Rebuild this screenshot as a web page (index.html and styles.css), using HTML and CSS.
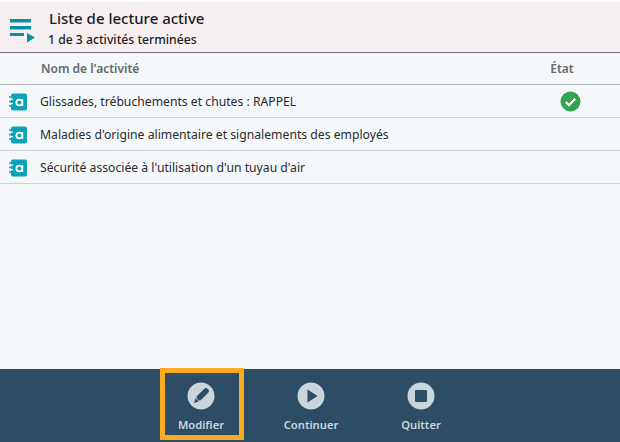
FILE: index.html
```html
<!DOCTYPE html>
<html lang="fr">
<head>
<meta charset="utf-8">
<title>Liste de lecture active</title>
<link rel="stylesheet" href="styles.css">
</head>
<body>
<div class="app">
  <header class="banner">
    <svg class="queue" width="26" height="24" viewBox="0 0 26 24"><path fill="#0b8fa3" d="M0 0h21v3.500H0zM0 7h21v3.500H0zM0 14h14v3H0zM17 14l8 4.500-8 5z"/></svg>
    <div class="titles">
      <div class="title">Liste de lecture active</div>
      <div class="sub">1 de 3 activités terminées</div>
    </div>
  </header>
  <main class="list">
    <div class="row head"><span class="name">Nom de l'activité</span><span class="state">État</span></div>
    <div class="row item">
      <svg class="ico" width="18" height="18" viewBox="0 0 18 18"><use href="#nb"/></svg>
      <span class="name">Glissades, trébuchements et chutes : RAPPEL</span>
      <span class="state"><svg width="21" height="21" viewBox="0 0 21 21"><circle cx="10.500" cy="10.500" r="10" fill="#32a350"/><path d="M5.800 11l3.200 3.200 6.200-6.400" fill="none" stroke="#fff" stroke-width="2.200"/></svg></span>
    </div>
    <div class="row item">
      <svg class="ico" width="18" height="18" viewBox="0 0 18 18"><use href="#nb"/></svg>
      <span class="name">Maladies d'origine alimentaire et signalements des employés</span>
    </div>
    <div class="row item">
      <svg class="ico" width="18" height="18" viewBox="0 0 18 18"><use href="#nb"/></svg>
      <span class="name">Sécurité associée à l'utilisation d'un tuyau d'air</span>
    </div>
  </main>
  <footer class="bar">
    <button class="act focus">
      <svg width="28" height="28" viewBox="0 0 28 28"><circle cx="14" cy="14" r="13.500" fill="#c9d5dc"/><path d="M12.500 15.500l6.500-6.500" fill="none" stroke="#2d4c66" stroke-width="5.500" stroke-linecap="round"/><path fill="#2d4c66" d="M7 21l1.500-4.800 3.300 3.300z"/></svg>
      <span>Modifier</span>
    </button>
    <button class="act">
      <svg width="28" height="28" viewBox="0 0 28 28"><circle cx="14" cy="14" r="13.500" fill="#c9d5dc"/><path fill="#2d4c66" d="M10.500 7.500l10 6.500-10 6.500z"/></svg>
      <span>Continuer</span>
    </button>
    <button class="act">
      <svg width="28" height="28" viewBox="0 0 28 28"><circle cx="14" cy="14" r="13.500" fill="#c9d5dc"/><rect x="8" y="8" width="12" height="12" rx="1" fill="#2d4c66"/></svg>
      <span>Quitter</span>
    </button>
  </footer>
</div>
<svg class="defs" width="0" height="0"><defs><g id="nb"><rect x="2" y="0.500" width="16" height="17" rx="2" fill="#0aa3b8"/><path d="M0 4h4M0 8.500h4M0 13h4" stroke="#0aa3b8" stroke-width="1.500"/><path d="M2 6.200h2M2 10.700h2" stroke="#fff" stroke-width="1.200"/><circle cx="10.300" cy="9.500" r="2.900" fill="none" stroke="#fff" stroke-width="1.800"/><path d="M13.500 6v7" stroke="#fff" stroke-width="1.500"/></g></defs></svg>
</body>
</html>
```
FILE: styles.css
```css
* { box-sizing: border-box; }
html, body { margin: 0; height: 100%; }
body { font-family: "Noto Sans", "Open Sans", sans-serif; background: #f4f8fa; color: #222; overflow: hidden; }
.defs { display: block; height: 0; }
.app { display: flex; flex-direction: column; height: 442px; padding-top: 2px; background: linear-gradient(#fff, #fff) top/100% 2px no-repeat #f4f8fa; }
.banner { display: flex; align-items: center; height: 51px; background: #f6eff2; border-bottom: 1px solid #6e6e6e; padding: 0 0 0 10px; flex: none; }
.queue { flex: none; margin: 7px 13px 0 0; }
.titles { display: flex; flex-direction: column; padding-top: 1px; }
.title { font-size: 15px; line-height: 20px; font-weight: 500; color: #1c1c22; }
.sub { font-size: 12.200px; line-height: 16px; font-weight: 500; color: #1c1c22; margin-top: 4px; margin-left: -1px; }
.list { flex: 1; }
.row { display: flex; align-items: center; position: relative; }
.head { height: 32px; padding-left: 41px; border-bottom: 1px solid #b4b8bb; font-size: 12px; font-weight: 600; color: #67686b; }
.head .state { font-size: 12px; width: 116px; }
.item { height: 33px; padding: 1px 0 0 9px; border-bottom: 1px solid #cdd5da; font-size: 12.200px; color: #2a2a2e; }
.ico { flex: none; margin-right: 13px; }
.name { flex: 1; }
.state { width: 100px; display: flex; justify-content: center; }
.bar { flex: none; height: 73px; background: #2d4c66; display: flex; padding-left: 161px; gap: 28px; }
.act { width: 82px; height: 70px; background: none; border: 0; padding: 13px 2px 0 0; margin: 0; display: flex; flex-direction: column; align-items: center; gap: 7px; font: 600 11.200px/16px "Noto Sans", sans-serif; color: #c9d5dc; }
.focus { outline: 5px solid #fbab21; outline-offset: -4px; }
```
